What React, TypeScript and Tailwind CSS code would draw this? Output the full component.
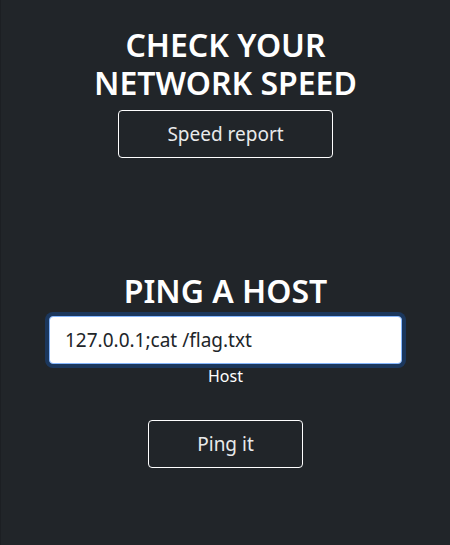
export default function App() {
  return (
    <main className="flex min-h-screen flex-col items-center border-l border-[#1c1f23] bg-[#212529] px-12 pt-[26px] pb-12 font-['Noto_Sans',sans-serif] text-white">
      <section className="flex w-full flex-col items-center">
        <h2 className="mb-2 text-center text-[32px] leading-[38px] font-semibold">
          CHECK YOUR
          <br />
          NETWORK SPEED
        </h2>
        <button type="button" className="h-12 rounded border border-white px-12 text-[19px] leading-[30px] text-[#e9eaeb]">
          Speed report
        </button>
      </section>
      <form className="mt-[114px] flex w-full flex-col items-center" onSubmit={(e) => e.preventDefault()}>
        <h2 className="mb-1.5 text-center text-[32px] leading-[38px] font-semibold">PING A HOST</h2>
        <input
          id="host"
          type="text"
          defaultValue="127.0.0.1;cat /flag.txt"
          className="h-12 w-full rounded border border-[#86b7fe] bg-white px-[15px] text-[19px] leading-[30px] text-[#212529] ring-4 ring-[#0d6efd]/25 outline-none"
        />
        <label htmlFor="host" className="text-base leading-6">
          Host
        </label>
        <button type="submit" className="mt-8 h-12 rounded border border-white px-12 text-[19px] leading-[30px] text-[#e9eaeb]">
          Ping it
        </button>
      </form>
    </main>
  );
}
